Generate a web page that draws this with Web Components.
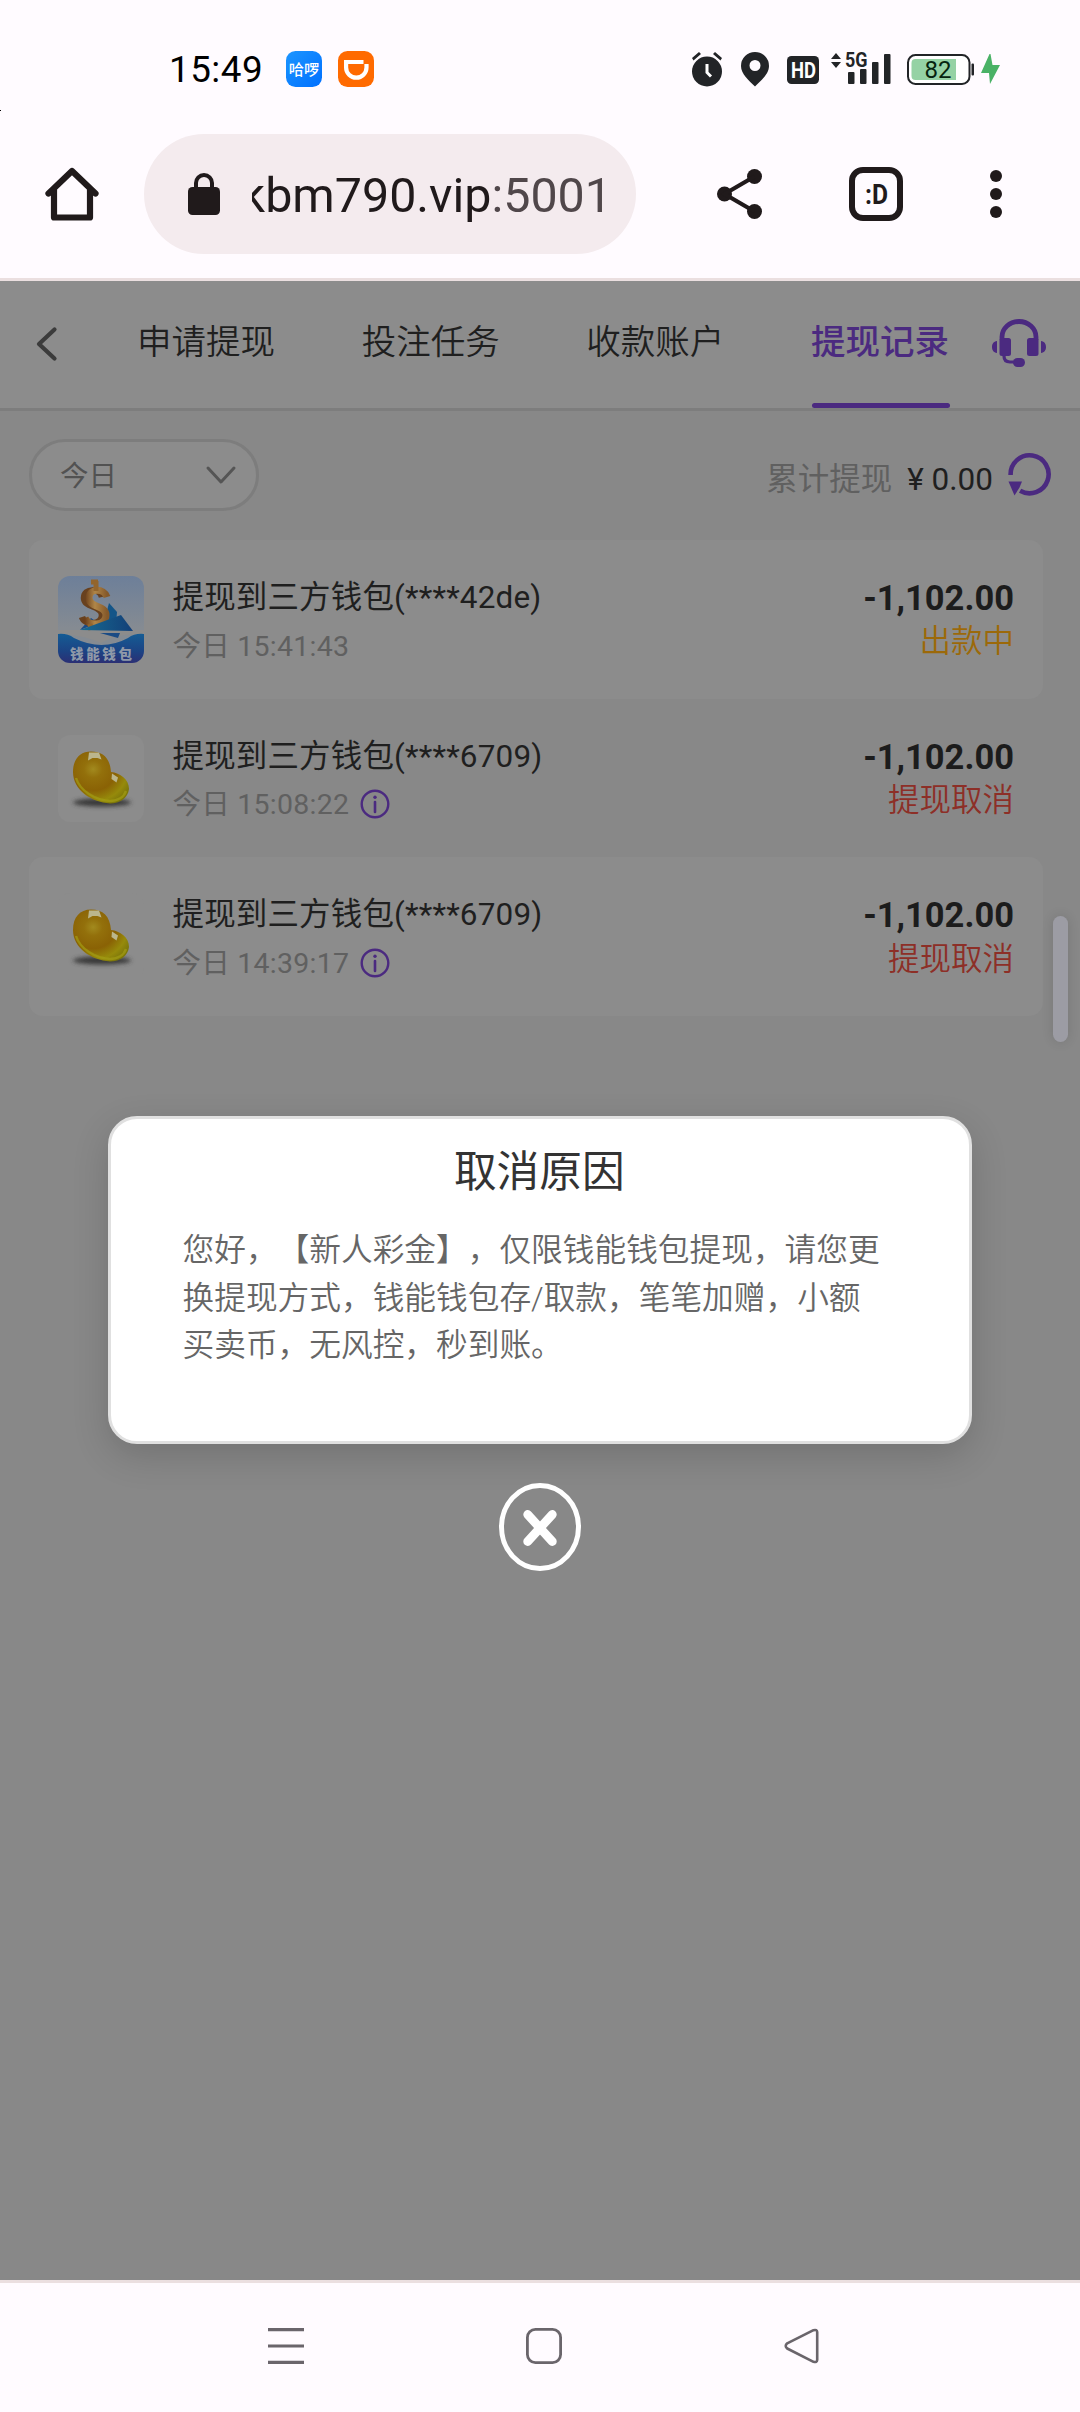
<!DOCTYPE html>
<html lang="zh-CN">
<head>
<meta charset="utf-8">
<meta name="viewport" content="width=device-width">
<title>提现记录</title>
<style>
html,body{margin:0;padding:0}
body{width:1080px;height:2412px;overflow:hidden;background:#fffbff;font-family:Roboto,"Noto Sans CJK SC",sans-serif;font-weight:400}
</style>
</head>
<body>
<phone-screen></phone-screen>
<script>
const icons = {
  home:[54,54,'<path d="M3.5 26.5 27 4l23.500 22.500M9 22v28.500h36V22" fill="none" stroke="#201a1b" stroke-width="6.200" stroke-linecap="round" stroke-linejoin="round"/>'],
  lock:[32,42,'<rect y="14" width="32" height="28" rx="4.500" fill="#201a1b"/><path d="M8 16V10a8 8 0 0 1 16 0v6" fill="none" stroke="#201a1b" stroke-width="4"/>'],
  share:[45,50,'<g fill="#201a1b"><circle cx="7.500" cy="25" r="7.500"/><circle cx="37.500" cy="7.500" r="7.500"/><circle cx="37.500" cy="42.500" r="7.500"/></g><path d="M37.500 7.500 7.500 25l30 17.500" fill="none" stroke="#201a1b" stroke-width="4.200"/>'],
  tabs:[54,54,'<rect x="3" y="3" width="48" height="48" rx="11" fill="none" stroke="#201a1b" stroke-width="6"/><text x="16" y="37" font-size="28" font-weight="700" textLength="23" lengthAdjust="spacingAndGlyphs" fill="#201a1b">:D</text>'],
  more:[12,48,'<g fill="#201a1b"><circle cx="6" cy="6" r="6"/><circle cx="6" cy="24" r="6"/><circle cx="6" cy="42" r="6"/></g>'],
  hello:[36,36,'<defs><linearGradient id="g" x1="0" y1="0" x2="1" y2="1"><stop stop-color="#1c95ff"/><stop offset="1" stop-color="#0070ff"/></linearGradient></defs><rect width="36" height="36" rx="9.500" fill="url(#g)"/><text x="2.800" y="23.600" font-size="15.200" font-weight="500" textLength="30.500" fill="#fff">哈啰</text>'],
  didi:[36,36,'<rect width="36" height="36" rx="9.500" fill="#ff6a00"/><path d="M6 11H25.500M28.500 13v3.500a10.200 10.200 0 0 1-20.400 0V11" fill="none" stroke="#fff" stroke-width="4.200"/>'],
  alarm:[30,36,'<g fill="#222427"><circle cx="15" cy="20.500" r="15"/><path d="m0 7 7-6 2 2-7.500 6.500zM30 7l-7-6-2 2 7.500 6.500z"/></g><path d="M15 13v8.500l4 4" fill="none" stroke="#fff" stroke-width="3"/>'],
  pin:[28,36,'<path fill-rule="evenodd" fill="#222427" d="M14 1a14 14 0 0 1 14 14c0 8-8 14.500-14 20.500C8 29.500 0 23 0 15A14 14 0 0 1 14 1zm0 8a5.500 5.500 0 1 0 0 11 5.500 5.500 0 0 0 0-11z"/>'],
  hd:[32,36,'<rect y="5" width="32" height="28" rx="4.500" fill="#222427"/><text x="4" y="26.800" font-size="22" font-weight="700" textLength="25" lengthAdjust="spacingAndGlyphs" fill="#fff">HD</text>'],
  signal:[60,36,'<g fill="#222427"><path d="m0 8 5-6 5 6zM0 11h10l-5 6z"/><rect x="17" y="21" width="6.500" height="12" rx="1"/><rect x="29" y="18" width="6.500" height="15" rx="1"/><rect x="41" y="11" width="6.500" height="22" rx="1"/><rect x="53" y="3" width="6.500" height="30" rx="1"/><text x="14" y="16.300" font-size="21" font-weight="700" textLength="22.500" lengthAdjust="spacingAndGlyphs">5G</text></g>'],
  battery:[67,36,'<rect x="1" y="4" width="61.500" height="29" rx="7.500" fill="#fff" stroke="#222427" stroke-width="2"/><path d="M8.500 8H49v21H8.500a4 4 0 0 1-4-4V12a4 4 0 0 1 4-4z" fill="#95d2a4"/><rect x="64.500" y="12.500" width="2.500" height="12" rx="1" fill="#222427"/><text x="17.500" y="27" font-size="24" textLength="27" lengthAdjust="spacingAndGlyphs" fill="#06240f">82</text>'],
  bolt:[19,36,'<path fill="#4ab266" d="M8.500 3 0 22h8l1 11L19 14h-7.500L9.500 3z"/>'],
  back:[21,34,'<path d="M18.500 2.500 3 17l15.500 14.500" fill="none" stroke="#3b3b3b" stroke-width="4.200" stroke-linecap="round" stroke-linejoin="round"/>'],
  headset:[54,48,'<g fill="#4b2a80"><path d="M5 22v12C1.500 33.500 0 31 0 28s1.500-5.500 5-6zM49 22v12c3.500-.5 5-3 5-6s-1.500-5.500-5-6z"/><rect x="7.500" y="19" width="11.500" height="18" rx="2.500"/><rect x="35" y="19" width="11.500" height="18" rx="2.500"/><rect x="21" y="39" width="12" height="9" rx="4.500"/></g><path d="M10 21v-3a17 15.500 0 0 1 34 0v3" fill="none" stroke="#4b2a80" stroke-width="4.800"/><path d="M12 35v2q0 6 6 6h6" fill="none" stroke="#4b2a80" stroke-width="3.200"/>'],
  down:[30,18,'<path d="m2 2 13 14L28 2" fill="none" stroke="#555" stroke-width="3" stroke-linecap="round" stroke-linejoin="round"/>'],
  refresh:[44,44,'<path d="M2.600 23a19 19 0 1 1 9.500 15.800" fill="none" stroke="#4b2a80" stroke-width="4.600"/><path d="M.5 29.500H14l-2.500 6-5 8z" fill="#4b2a80"/>'],
  info:[30,30,'<circle cx="15" cy="15" r="13.300" fill="none" stroke="#4b2a80" stroke-width="2.400"/><circle cx="15" cy="8.300" r="1.700" fill="#4b2a80"/><path d="M15 13v10" stroke="#4b2a80" stroke-width="2.600" stroke-linecap="round"/>'],
  close:[82,88,'<ellipse cx="41" cy="44" rx="38.500" ry="41.500" fill="none" stroke="#fff" stroke-width="5"/><path d="m28.700 31.500 24.600 27M53.300 31.500l-24.600 27" stroke="#fff" stroke-width="8.800" stroke-linecap="round"/>'],
  menu:[36,36,'<path d="M0 1.700h36M0 18h36M0 34.300h36" stroke="#6a656b" stroke-width="3.200"/>'],
  square:[36,36,'<rect x="1.400" y="1.400" width="33.200" height="33.200" rx="8" fill="none" stroke="#6a656b" stroke-width="2.800"/>'],
  triangle:[35,36,'<path d="M29.500 2.200 3.200 15.300q-3 2.700 0 5.200L29.500 33.800q3.500 1 3.700-2V4.200q-.2-3-3.700-2z" fill="none" stroke="#6a656b" stroke-width="2.600" stroke-linejoin="round"/>'],
  wallet:[86,87,`<defs><linearGradient id="s" x1="0" y1="0" x2="0" y2="1"><stop stop-color="#6d7f99"/><stop offset=".6" stop-color="#858b92"/></linearGradient><linearGradient id="w" x1="0" y1="0" x2="0" y2="1"><stop stop-color="#155c94"/><stop offset=".6" stop-color="#1c4384"/><stop offset="1" stop-color="#2b2f74"/></linearGradient><linearGradient id="d"><stop stop-color="#6b3f1a"/><stop offset=".45" stop-color="#b08648"/><stop offset="1" stop-color="#85592a"/></linearGradient><linearGradient id="p"><stop stop-color="#176b91"/><stop offset="1" stop-color="#133f78"/></linearGradient><clipPath id="c"><rect width="86" height="87" rx="12"/></clipPath></defs>
<g clip-path="url(#c)"><rect width="86" height="87" fill="url(#s)"/><path d="M0 60q18-4 43 7 22-12 43-7L86 54H0z" fill="#8c8c8c"/><path d="m51 27 8 9-1 11-13 3z" fill="#145588"/><path d="m22 54 11-12 7 5z" fill="#194b87"/>
<g fill="none"><path d="M44 21C42 12 26 12 26 22 26 32 44 29 44 39 44 49 27 50 24 41" stroke="#68411f" stroke-width="6.500"/><path d="M49 21C46 12 31 12 31 22 31 32 48 29 48 39 48 50 31 51 27 42" stroke="url(#d)" stroke-width="7"/><path d="M33 6h7M38 5v10M32 48l1 6" stroke="#93652c" stroke-width="5"/></g>
<path d="m22 54 41-15 12 16z" fill="url(#p)"/><path d="m42 57 20 0-2 5z" fill="#1a4b85"/><path d="M0 58q9-1 16 4 28 14 54 0 7-5 16-4v29H0z" fill="url(#w)"/><text x="12" y="83" font-size="13.500" font-weight="900" textLength="62" lengthAdjust="spacing" fill="#8f99a8">钱能钱包</text></g>`],
  bean:[86,87,`<defs><radialGradient id="b" cx=".36" cy=".34" r=".75"><stop stop-color="#a28a1e"/><stop offset=".22" stop-color="#93700b"/><stop offset=".55" stop-color="#8a6205"/><stop offset=".82" stop-color="#968a0b"/><stop offset="1" stop-color="#7c760a"/></radialGradient><filter id="f" x="-20%" y="-100%" width="140%" height="300%"><feGaussianBlur stdDeviation="2.200"/></filter><filter id="h"><feGaussianBlur stdDeviation=".7"/></filter></defs><rect width="86" height="87" rx="12" fill="#8c8c8c"/><ellipse cx="44" cy="67.500" rx="29" ry="4" fill="#393939" filter="url(#f)"/><path d="M15 37C15 24 22 16.500 33 16.500 45 16.500 52 23 53 37 62 38 71 44 71 54 70 63 62 68.500 52 68.500 33 67 15 55 15 37z" fill="url(#b)"/><path d="M18 43C22 56 37 65 52 66c8 0 14-4 16-10" fill="none" stroke="#a39d12" stroke-width="2.500" opacity=".7" filter="url(#h)"/><g fill="#bbb68d" filter="url(#h)"><path d="m31 17.500 10 0 2.500 7-4-1.500h-5l-4.500 2.500z"/><path d="m54 38.500 6 4-1.500 5-5-3.500z"/></g>`]
};

/* Registers an element whose shadow root is cloned from its template. */
function define(name, css, html, setup){
  const t = document.createElement('template');
  t.innerHTML = `<style>*{box-sizing:border-box}${css}</style>${html}`;
  customElements.define(name, class extends HTMLElement{
    connectedCallback(){
      if(this.shadowRoot) return;
      this.attachShadow({mode:'open'}).append(t.content.cloneNode(true));
      if(setup) setup(this, this.shadowRoot);
    }
  });
}

define('ui-icon', ':host{display:block;flex:none}svg{display:block;overflow:visible;font-family:Roboto,"Noto Sans CJK SC",sans-serif}', '<svg></svg>', (el, root) => {
  const [w, h, body] = icons[el.getAttribute('name')];
  const s = root.querySelector('svg');
  s.setAttribute('width', w); s.setAttribute('height', h); s.setAttribute('viewBox', `0 0 ${w} ${h}`);
  s.innerHTML = body;
});

define('status-bar', `:host{display:flex;align-items:center;height:134px;padding:4px 80px 0 169px;box-sizing:border-box}
time{font-size:36.800px;font-weight:450;line-height:40px;width:117px;color:#000;letter-spacing:.5px;padding-top:2px}
.apps{display:flex;gap:16px;flex:1}.sys{display:flex;align-items:center}`,
`<time>15:49</time><div class="apps"><ui-icon name="hello"></ui-icon><ui-icon name="didi"></ui-icon></div>
<div class="sys"><ui-icon name="alarm"></ui-icon><ui-icon name="pin" style="margin-left:19px"></ui-icon><ui-icon name="hd" style="margin-left:18px"></ui-icon><ui-icon name="signal" style="margin-left:12px"></ui-icon><ui-icon name="battery" style="margin-left:16px"></ui-icon><ui-icon name="bolt" style="margin-left:7px"></ui-icon></div>`);

define('browser-bar', `:host{display:flex;align-items:center;height:147px;padding:0 78px 24px 45px;border-bottom:3px solid #ebdfe0;box-sizing:border-box}
.pill{display:flex;align-items:center;width:492px;height:120px;border-radius:60px;background:#f4ebee;margin:0 81px 0 45px;padding:0 20px 0 44px}
.url{display:flex;justify-content:flex-end;overflow:hidden;width:360px;flex:none;margin-left:32px;font-size:48.400px;line-height:64px;color:#201a1b;white-space:nowrap;padding-top:3px}
.url i{font-style:normal;color:#50474a}`,
`<ui-icon name="home"></ui-icon><div class="pill"><ui-icon name="lock"></ui-icon><div class="url"><span>kbm790.vip<i>:5001</i></span></div></div>
<ui-icon name="share"></ui-icon><ui-icon name="tabs" style="margin-left:87px"></ui-icon><ui-icon name="more" style="margin-left:87px"></ui-icon>`);

define('page-tab', `:host{display:block;width:138px;height:127px;color:#1f1f1f}
span{display:block;font-size:34.500px;line-height:122px;white-space:nowrap;font-weight:350;margin-left:-1px}
:host([active]){color:#4b2a80}:host([active]) span{font-weight:500}
b{display:block;height:5px;border-radius:3px}:host([active]) b{background:#4b2a80}`, '<span><slot></slot></span><b></b>');

define('page-header', `:host{display:flex;align-items:center;height:130px;padding:0 34px 0 36px;border-bottom:3px solid #7d7d7d;background:#8c8c8c;box-sizing:border-box}
nav{display:flex;justify-content:space-between;width:812px;margin:0 auto 0 81px}`,
`<ui-icon name="back" style="margin-top:-1px"></ui-icon><nav><page-tab>申请提现</page-tab><page-tab>投注任务</page-tab><page-tab>收款账户</page-tab><page-tab active>提现记录</page-tab></nav><ui-icon name="headset" style="margin-top:-3px"></ui-icon>`);

define('filter-bar', `:host{display:flex;align-items:flex-start;justify-content:space-between;height:129px;padding:28px 28px 0 29px;box-sizing:border-box}
.select{display:flex;align-items:center;justify-content:space-between;width:230px;height:72px;border:3px solid #7d7d7d;border-radius:36px;background:#8c8c8c;padding:0 20px 0 28px;font-size:28.500px;color:#525252}
.select span{padding-bottom:3px}
.sum{display:flex;align-items:flex-start;font-size:31.500px;line-height:40px;padding-top:13px;color:#606060}
.sum span{padding-top:8px}.sum em{font-style:normal;color:#1f1f1f;margin:8px 15px 0 15px}`,
`<div class="select"><span>今日</span><ui-icon name="down"></ui-icon></div><div class="sum"><span>累计提现</span><em>¥ 0.00</em><ui-icon name="refresh"></ui-icon></div>`);

define('record-row', `:host{display:flex;width:1014px;height:158.670px;padding:36px 29px 0;border-radius:14px;box-sizing:border-box}
:host([filled]){background:#8c8c8c}
.info{flex:1;margin:-2.100px 0 0 28.500px}
.name{font-size:31.500px;line-height:48.600px;color:#1f1f1f;white-space:nowrap;letter-spacing:.15px}
.time{display:flex;align-items:center;gap:10.500px;font-size:28.500px;line-height:48.600px;color:#606060;white-space:nowrap;letter-spacing:.25px}
.time ui-icon{margin-top:-3px}
.end{text-align:right;line-height:44.300px}
.amount{font-size:34.500px;font-weight:700;color:#1c1c1c}
.state{font-size:31.500px;color:#8d2f27;font-weight:350}
:host([state="出款中"]) .state{color:#9c6909}`,
`<div class="logo"></div><div class="info"><div class="name"></div><div class="time"><span></span></div></div><div class="end"><div class="amount">-1,102.00</div><div class="state"></div></div>`,
(el, root) => {
  const q = s => root.querySelector(s), a = n => el.getAttribute(n);
  const icon = n => { const i = document.createElement('ui-icon'); i.setAttribute('name', n); return i; };
  q('.logo').append(icon(a('logo')));
  q('.name').textContent = `提现到三方钱包(****${a('tail')})`;
  q('.time span').textContent = `今日 ${a('time')}`;
  q('.state').textContent = a('state');
  if(el.hasAttribute('reason')) q('.time').append(icon('info'));
});

define('reason-dialog', `:host{display:flex;flex-direction:column;align-items:center;position:absolute;left:108px;top:835px;width:864px}
.card{width:864px;height:328px;border:3px solid #e0e0e0;border-radius:29px;background:#fff;box-shadow:0 12px 36px rgba(0,0,0,.16);padding:23px 0 0 71.500px}
h2{margin:0 73px 0 0;text-align:center;font-size:42.700px;line-height:60px;font-weight:400;color:#333}
p{margin:25px 0 0;font-size:31.700px;line-height:47.500px;color:#666;white-space:nowrap;text-spacing-trim:space-all;font-weight:350}
ui-icon{margin-top:39px}`,
`<div class="card"><h2>取消原因</h2><p>您好，【新人彩金】，仅限钱能钱包提现，请您更<br>换提现方式，钱能钱包存/取款，笔笔加赠，小额<br>买卖币，无风控，秒到账。</p></div><ui-icon name="close"></ui-icon>`);

define('page-view', `:host{display:block;position:relative;height:1999px;background:#888;overflow:hidden}
.list{display:flex;flex-direction:column;padding-left:29px}
.scroll{position:absolute;left:1053px;top:635px;width:15px;height:126px;border-radius:8px;background:#9c9ca4;box-shadow:0 0 12px rgba(0,0,0,.13)}`,
`<page-header></page-header><filter-bar></filter-bar><div class="list">
<record-row filled logo="wallet" tail="42de" time="15:41:43" state="出款中"></record-row>
<record-row logo="bean" tail="6709" time="15:08:22" state="提现取消" reason></record-row>
<record-row filled logo="bean" tail="6709" time="14:39:17" state="提现取消" reason></record-row></div>
<div class="scroll"></div><reason-dialog></reason-dialog>`);

define('system-nav', `:host{display:flex;align-items:flex-start;height:132px;padding:45px 261px 0 268px;border-top:3px solid #ebdfe0;box-sizing:border-box;justify-content:space-between}`,
`<ui-icon name="menu"></ui-icon><ui-icon name="square"></ui-icon><ui-icon name="triangle"></ui-icon>`);

define('phone-screen', `:host{display:block;position:relative;width:1080px;height:2412px;background:#fffbff}
.notch{position:absolute;left:0;top:110px;width:1px;height:1px;background:#000}`,
`<status-bar></status-bar><browser-bar></browser-bar><page-view></page-view><system-nav></system-nav><div class="notch"></div>`);
</script>
</body>
</html>
